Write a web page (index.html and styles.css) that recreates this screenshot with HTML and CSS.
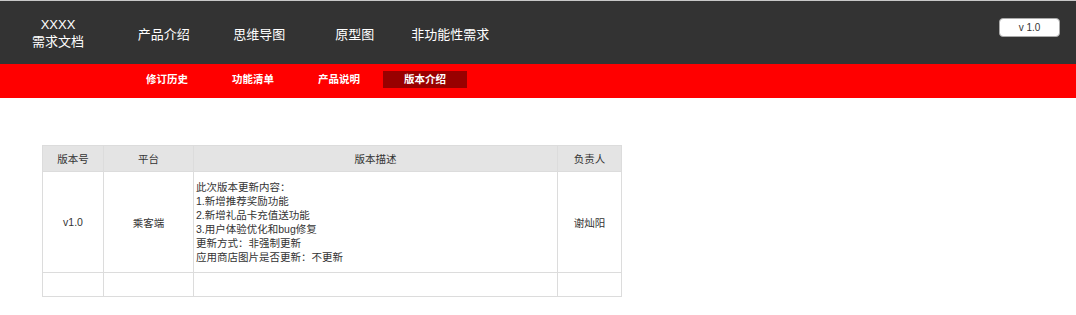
FILE: index.html
```html
<!DOCTYPE html>
<html lang="zh-CN">
<head>
  <meta charset="UTF-8">
  <title>需求文档 - 版本介绍</title>
  <link rel="stylesheet" href="styles.css">
</head>
<body>
  <div class="topbar">
    <div class="logo">XXXX<br>需求文档</div>
    <a class="nav-item">产品介绍</a>
    <a class="nav-item">思维导图</a>
    <a class="nav-item">原型图</a>
    <a class="nav-item">非功能性需求</a>
    <div class="version">v 1.0</div>
  </div>
  <div class="subbar">
    <a class="sub-item">修订历史</a>
    <a class="sub-item">功能清单</a>
    <a class="sub-item">产品说明</a>
    <a class="sub-item active">版本介绍</a>
  </div>
  <table class="versions">
    <colgroup>
      <col class="c-ver">
      <col class="c-plat">
      <col class="c-desc">
      <col class="c-owner">
    </colgroup>
    <tr>
      <th>版本号</th>
      <th>平台</th>
      <th>版本描述</th>
      <th>负责人</th>
    </tr>
    <tr class="main-row">
      <td>v1.0</td>
      <td>乘客端</td>
      <td class="desc">此次版本更新内容：<br>1.新增推荐奖励功能<br>2.新增礼品卡充值送功能<br>3.用户体验优化和bug修复<br>更新方式：非强制更新<br>应用商店图片是否更新：不更新</td>
      <td>谢灿阳</td>
    </tr>
    <tr class="empty-row">
      <td></td>
      <td></td>
      <td></td>
      <td></td>
    </tr>
  </table>
</body>
</html>
```

FILE: styles.css
```css
body {
  margin: 0;
  padding: 0;
  background: #ffffff;
  font-family: "Liberation Sans", "Noto Sans CJK SC", sans-serif;
  color: #333;
}
.topbar {
  display: flex;
  align-items: center;
  height: 63px;
  background: #333333;
  border-top: 1px solid #c8c8c8;
  color: #ffffff;
}
.logo {
  width: 116px;
  text-align: center;
  font-size: 13px;
  line-height: 17px;
  padding-top: 1px;
}
.nav-item {
  width: 95.5px;
  text-align: center;
  font-size: 13px;
  color: #ffffff;
  padding-top: 2px;
}
.version {
  margin-left: auto;
  margin-right: 16px;
  margin-top: -10px;
  width: 59px;
  height: 17px;
  line-height: 17px;
  background: #ffffff;
  border: 1px solid #aaa;
  border-radius: 4px;
  color: #333;
  font-size: 10px;
  text-align: center;
}
.subbar {
  display: flex;
  gap: 2px;
  height: 34px;
  box-sizing: border-box;
  padding: 7px 0 0 125px;
  background: #ff0000;
}
.sub-item {
  width: 84px;
  height: 17px;
  line-height: 17px;
  text-align: center;
  font-size: 10.5px;
  font-weight: bold;
  color: #ffffff;
}
.sub-item.active {
  background: #990000;
}
.versions {
  margin: 47px 0 0 42px;
  border-collapse: collapse;
  font-size: 10.5px;
  color: #333;
}
.c-ver { width: 61px; }
.c-plat { width: 90px; }
.c-desc { width: 364px; }
.c-owner { width: 64px; }
.versions th,
.versions td {
  border: 1px solid #dcdcdc;
  text-align: center;
  padding: 0;
}
.versions th {
  height: 25px;
  background: #e4e4e4;
  font-weight: normal;
}
.main-row td {
  height: 100px;
}
.versions td.desc {
  text-align: left;
  line-height: 14px;
  padding-left: 2px;
}
.empty-row td {
  height: 23px;
}
```
